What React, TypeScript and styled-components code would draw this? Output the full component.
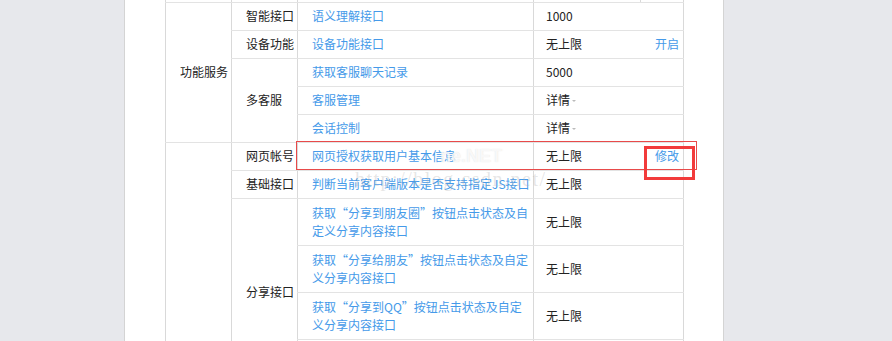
import React from 'react';
import styled, { createGlobalStyle } from 'styled-components';

interface Api {
  name: string;
  limit: string;
  action?: string;
  caret?: boolean;
  tall?: boolean;
}

interface Group {
  title: string;
  apis: Api[];
}

interface Section {
  title: string;
  groups: Group[];
}

const sections: Section[] = [
  {
    title: '功能服务',
    groups: [
      { title: '智能接口', apis: [{ name: '语义理解接口', limit: '1000' }] },
      { title: '设备功能', apis: [{ name: '设备功能接口', limit: '无上限', action: '开启' }] },
      {
        title: '多客服',
        apis: [
          { name: '获取客服聊天记录', limit: '5000' },
          { name: '客服管理', limit: '详情', caret: true },
          { name: '会话控制', limit: '详情', caret: true },
        ],
      },
    ],
  },
  {
    title: '网页服务',
    groups: [
      {
        title: '网页帐号',
        apis: [{ name: '网页授权获取用户基本信息', limit: '无上限', action: '修改' }],
      },
      { title: '基础接口', apis: [{ name: '判断当前客户端版本是否支持指定JS接口', limit: '无上限' }] },
      {
        title: '分享接口',
        apis: [
          { name: '获取“分享到朋友圈”按钮点击状态及自定义分享内容接口', limit: '无上限', tall: true },
          { name: '获取“分享给朋友”按钮点击状态及自定义分享内容接口', limit: '无上限', tall: true },
          { name: '获取“分享到QQ”按钮点击状态及自定义分享内容接口', limit: '无上限', tall: true },
          { name: '获取“分享到腾讯微博”按钮点击状态及自定义分享内容接口', limit: '无上限', tall: true },
        ],
      },
      {
        title: '图像接口',
        apis: [
          { name: '拍照或从手机相册中选图接口', limit: '无上限' },
          { name: '预览图片接口', limit: '无上限' },
          { name: '上传图片接口', limit: '无上限' },
          { name: '下载图片接口', limit: '无上限' },
        ],
      },
      {
        title: '音频接口',
        apis: [
          { name: '开始录音接口', limit: '无上限' },
          { name: '停止录音接口', limit: '无上限' },
          { name: '播放语音接口', limit: '无上限' },
          { name: '暂停播放接口', limit: '无上限' },
        ],
      },
    ],
  },
];

const App = () => {
  return (
    <>
      <GlobalStyle />
      <Page>
        <Panel>
          <TableWrap>
            <ApiTable>
              <colgroup>
                <col style={{ width: 66 }} />
                <col style={{ width: 66 }} />
                <col style={{ width: 236 }} />
                <col style={{ width: 107 }} />
                <col style={{ width: 43 }} />
              </colgroup>
              <tbody>
                <StubRow>
                  <StubCell />
                  <StubCell />
                  <StubCell />
                  <StubCell />
                  <StubCell $noLeft />
                </StubRow>
                {sections.map((section) => {
                  const sectionRows = section.groups.reduce((n, g) => n + g.apis.length, 0);
                  return section.groups.map((group, gi) =>
                    group.apis.map((api, ai) => (
                      <tr key={`${section.title}-${group.title}-${api.name}`}>
                        {gi === 0 && ai === 0 && (
                          <LabelCell rowSpan={sectionRows}>{section.title}</LabelCell>
                        )}
                        {ai === 0 && <LabelCell rowSpan={group.apis.length}>{group.title}</LabelCell>}
                        <LinkCell $tall={api.tall}>{api.name}</LinkCell>
                        <ValueCell $tall={api.tall}>
                          {api.limit}
                          {api.caret && <Caret />}
                        </ValueCell>
                        <ActionCell $tall={api.tall}>{api.action}</ActionCell>
                      </tr>
                    ))
                  );
                })}
              </tbody>
            </ApiTable>
            <RowMark />
            <ActionMark />
            <Watermark>http://blog.csdn.net/</Watermark>
            <Stamp>ne.NET</Stamp>
          </TableWrap>
        </Panel>
      </Page>
    </>
  );
};

export default App;

const GlobalStyle = createGlobalStyle`
  html, body {
    margin: 0;
    padding: 0;
    background: #e7e8ec;
    overflow: hidden;
  }
  body {
    font-family: "Noto Sans CJK SC", "Liberation Sans", sans-serif;
  }
`;

const Page = styled.div`
  display: flex;
  height: 341px;
  overflow: hidden;
`;

const Panel = styled.section`
  box-sizing: border-box;
  width: 600px;
  margin-left: 124px;
  padding: 0 39px 0 40px;
  background: #fff;
  border-left: 1px solid #d4d4d4;
  border-right: 1px solid #d4d4d4;
`;

const TableWrap = styled.div`
  position: relative;
`;

const ApiTable = styled.table`
  width: 519px;
  border-collapse: collapse;
  table-layout: fixed;
  font-size: 12px;
  line-height: 18px;
  color: #333;
`;

const StubRow = styled.tr`
  height: 2px;
`;

const StubCell = styled.td<{ $noLeft?: boolean }>`
  padding: 0;
  height: 1px;
  border-left: ${(p) => (p.$noLeft ? 'none' : '1px solid #d9d9d9')};
  border-right: 1px solid #d9d9d9;
  border-bottom: 1px solid #e3e3e3;
`;

const Cell = styled.td<{ $tall?: boolean }>`
  padding: ${(p) => (p.$tall ? '5px' : '4px')} 14px 5px;
  border-bottom: 1px solid #e3e3e3;
  border-left: 1px solid #d9d9d9;
  vertical-align: middle;
`;

const LabelCell = styled(Cell)`
  padding-right: 0;
  white-space: nowrap;
  color: #222;
`;

const LinkCell = styled(Cell)`
  padding-right: 2px;
  color: #459ae9;
`;

const ValueCell = styled(Cell)`
  padding-left: 12px;
  padding-right: 0;
  color: #222;
  white-space: nowrap;
`;

const ActionCell = styled(Cell)`
  padding-left: 0;
  padding-right: 4px;
  border-left: none;
  border-right: 1px solid #d9d9d9;
  text-align: right;
  white-space: nowrap;
  color: #459ae9;
`;

const Caret = styled.span`
  display: inline-block;
  width: 0;
  height: 0;
  margin-left: 2px;
  vertical-align: middle;
  border-left: 2px solid transparent;
  border-right: 2px solid transparent;
  border-top: 2px solid #bbb;
`;

const RowMark = styled.div`
  position: absolute;
  left: 131px;
  top: 141px;
  width: 399px;
  height: 27px;
  border: 1px solid #e84a4a;
  pointer-events: none;
`;

const ActionMark = styled.div`
  position: absolute;
  left: 479px;
  top: 146px;
  width: 45px;
  height: 28px;
  border: 3px solid #f23b3b;
  pointer-events: none;
`;

const Watermark = styled.div`
  position: absolute;
  left: 190px;
  top: 168px;
  font-family: "Liberation Serif", serif;
  font-size: 20px;
  letter-spacing: 1.5px;
  color: rgba(170, 170, 170, 0.3);
  pointer-events: none;
`;

const Stamp = styled.div`
  position: absolute;
  left: 275px;
  top: 146px;
  font-family: "Liberation Sans", sans-serif;
  font-size: 18px;
  font-weight: bold;
  color: rgba(255, 255, 255, 0.8);
  text-shadow: 0 0 1px rgba(160, 160, 160, 0.35);
  pointer-events: none;
`;
